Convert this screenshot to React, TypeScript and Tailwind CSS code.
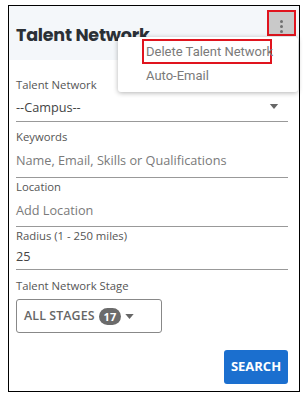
const fields = [
  { label: 'Keywords', value: 'Name, Email, Skills or Qualifications', muted: true, mt: 'mt-[7px]', h: 'h-[33px]' },
  { label: 'Location', value: 'Add Location', muted: true, mt: 'mt-[1px]', h: 'h-[32px]' },
  { label: 'Radius (1 - 250 miles)', value: '25', muted: false, mt: 'mt-[1px]', h: 'h-[26px]' },
]

function Caret({ className = '' }: { className?: string }) {
  return (
    <svg viewBox="0 0 10 6" className={className} fill="currentColor">
      <path d="M0 0h10L5 6z" />
    </svg>
  )
}

export default function App() {
  return (
    <div className="w-[306px] h-[396px] bg-white pt-[5px] pl-[8px] font-['Open_Sans',sans-serif]">
      <div className="relative w-[292px] h-[387px] border border-black flex flex-col">
        {/* header */}
        <div className="h-[54px] bg-[#f4f7fa] flex items-start justify-between pl-[7px] pr-[3px] pt-[4px]">
          <h1 className="mt-[14px] text-[17.5px] leading-[22px] font-bold text-[#2b3036] font-['Poppins','Inter',sans-serif] tracking-[-0.2px]">
            Talent Network
          </h1>
          <button className="w-[29px] h-[26px] border-2 border-[#e0141e] bg-[#c9c9c9] flex flex-col items-center justify-center gap-[2px] pt-[6px]">
            <span className="w-[3px] h-[3px] rounded-full bg-[#707070]" />
            <span className="w-[3px] h-[3px] rounded-full bg-[#707070]" />
            <span className="w-[3px] h-[3px] rounded-full bg-[#707070]" />
          </button>
        </div>

        {/* menu */}
        <div className="absolute left-[109px] top-[31px] w-[180px] h-[55px] bg-white rounded-[3px] shadow-[0_1px_5px_rgba(0,0,0,0.3)] font-['Roboto',sans-serif] text-[13px] text-[#7a7a7a] pt-[2px] whitespace-nowrap">
          <div className="ml-[24px] w-[130px] h-[25px] border-2 border-[#e0141e] flex items-center pl-[2px]">
            Delete Talent Network
          </div>
          <div className="ml-[28px] mt-[2px] leading-[20px]">Auto-Email</div>
        </div>

        <div className="flex-1 pl-[7px] pr-[11px]">
          {/* talent network select */}
          <div className="mt-[17px] text-[11.3px] leading-[16px] text-[#555]">Talent Network</div>
          <div className="flex items-center justify-between h-[29px] pt-[2px] border-b border-[#999] text-[12.7px] text-[#444]">
            <span>--Campus--</span>
            <Caret className="self-start mt-[9px] w-[10px] h-[5px] text-[#666] mr-[9px]" />
          </div>

          {fields.map(f => (
            <div key={f.label}>
              <div className={`${f.mt} text-[11.3px] leading-[16px] text-[#555]`}>{f.label}</div>
              <div className={`${f.h} flex items-center border-b border-[#999] text-[12.7px] ${f.muted ? 'text-[#7a7a7a]' : 'text-[#444]'}`}>
                {f.value}
              </div>
            </div>
          ))}

          <div className="mt-[8px] text-[11.3px] leading-[16px] text-[#555]">Talent Network Stage</div>
          <button className="mt-[5px] w-[146px] h-[34px] border border-[#888] rounded-[3px] flex items-center pl-[7px] gap-[4px]">
            <span className="text-[12.4px] font-semibold text-[#666] tracking-[0.1px]">ALL STAGES</span>
            <span className="h-[17px] px-[5px] rounded-full bg-[#6b6b6b] text-white text-[11px] font-bold leading-[17px]">17</span>
            <Caret className="w-[9px] h-[5px] text-[#666]" />
          </button>

          <div className="flex justify-end mt-[17px]">
            <button className="w-[64px] h-[34px] rounded-[3px] bg-[#1b6fcf] text-white text-[13px] font-bold">
              SEARCH
            </button>
          </div>
        </div>
      </div>
    </div>
  )
}
